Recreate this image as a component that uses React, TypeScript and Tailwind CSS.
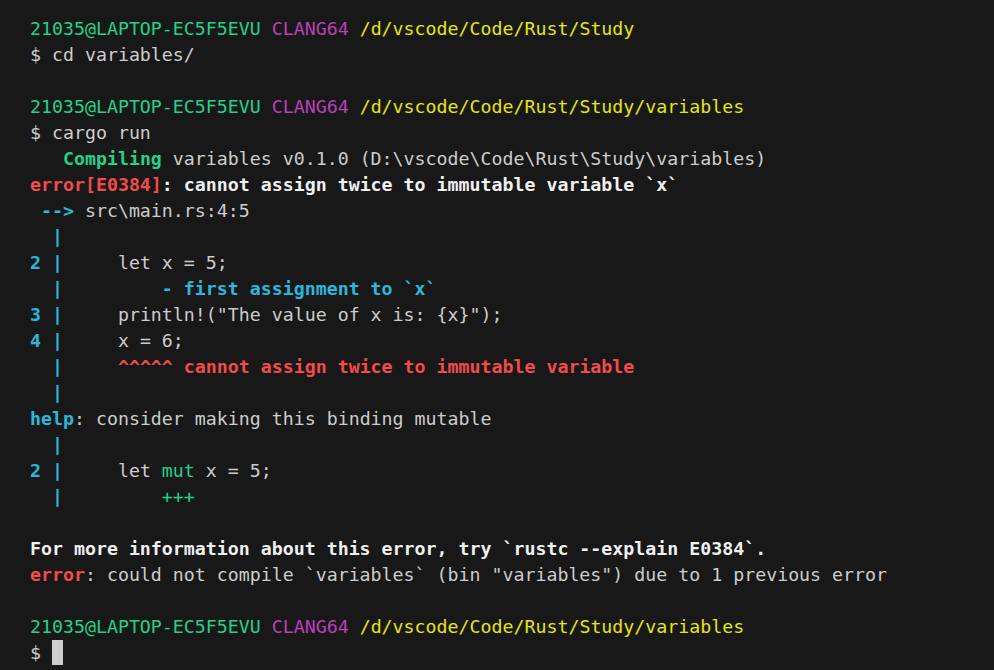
import React from 'react';

type Seg = { t: string; c?: string };

// terminal palette
const G = 'text-[#23d18b]';
const M = 'text-[#bc3fbc]';
const Y = 'text-[#e5e510]';
const R = 'text-[#f14c4c]';
const C = 'text-[#29b8db]';
const W = 'text-[#f0f0f0] font-bold';

const prompt = (path: string): Seg[] => [
  { t: '21035@LAPTOP-EC5F5EVU ', c: G },
  { t: 'CLANG64 ', c: M },
  { t: path, c: Y },
];

const lines: Seg[][] = [
  prompt('/d/vscode/Code/Rust/Study'),
  [{ t: '$ cd variables/' }],
  [],
  prompt('/d/vscode/Code/Rust/Study/variables'),
  [{ t: '$ cargo run' }],
  [{ t: '   ' }, { t: 'Compiling', c: `${G} font-bold` }, { t: ' variables v0.1.0 (D:\\vscode\\Code\\Rust\\Study\\variables)' }],
  [{ t: 'error[E0384]', c: `${R} font-bold` }, { t: ': cannot assign twice to immutable variable `x`', c: W }],
  [{ t: ' --> ', c: `${C} font-bold` }, { t: 'src\\main.rs:4:5' }],
  [{ t: '  |', c: `${C} font-bold` }],
  [{ t: '2 |', c: `${C} font-bold` }, { t: '     let x = 5;' }],
  [{ t: '  |', c: `${C} font-bold` }, { t: '         - first assignment to `x`', c: `${C} font-bold` }],
  [{ t: '3 |', c: `${C} font-bold` }, { t: '     println!("The value of x is: {x}");' }],
  [{ t: '4 |', c: `${C} font-bold` }, { t: '     x = 6;' }],
  [{ t: '  |', c: `${C} font-bold` }, { t: '     ^^^^^ cannot assign twice to immutable variable', c: `${R} font-bold` }],
  [{ t: '  |', c: `${C} font-bold` }],
  [{ t: 'help', c: `${C} font-bold` }, { t: ': consider making this binding mutable' }],
  [{ t: '  |', c: `${C} font-bold` }],
  [{ t: '2 |', c: `${C} font-bold` }, { t: '     let ' }, { t: 'mut', c: G }, { t: ' x = 5;' }],
  [{ t: '  |', c: `${C} font-bold` }, { t: '         +++', c: G }],
  [],
  [{ t: 'For more information about this error, try `rustc --explain E0384`.', c: W }],
  [{ t: 'error', c: `${R} font-bold` }, { t: ': could not compile `variables` (bin "variables") due to 1 previous error' }],
  [],
  prompt('/d/vscode/Code/Rust/Study/variables'),
];

export default function App() {
  return (
    <div
      className="w-[994px] h-[670px] overflow-hidden bg-[#181818] text-[#cccccc] pl-[30px] pt-[16px] text-[18.25px]"
      style={{ fontFamily: '"DejaVu Sans Mono", "Liberation Mono", monospace' }}
    >
      {lines.map((segs, i) => (
        <div key={i} className="h-[26px] leading-[26px] whitespace-pre">
          {segs.map((s, j) => (
            <span key={j} className={s.c}>{s.t}</span>
          ))}
        </div>
      ))}
      <div className="h-[26px] leading-[26px] whitespace-pre flex items-center">
        <span>$ </span>
        <span className="inline-block w-[11px] h-[25px] bg-[#cccccc] -mt-[2px]" />
      </div>
    </div>
  );
}
